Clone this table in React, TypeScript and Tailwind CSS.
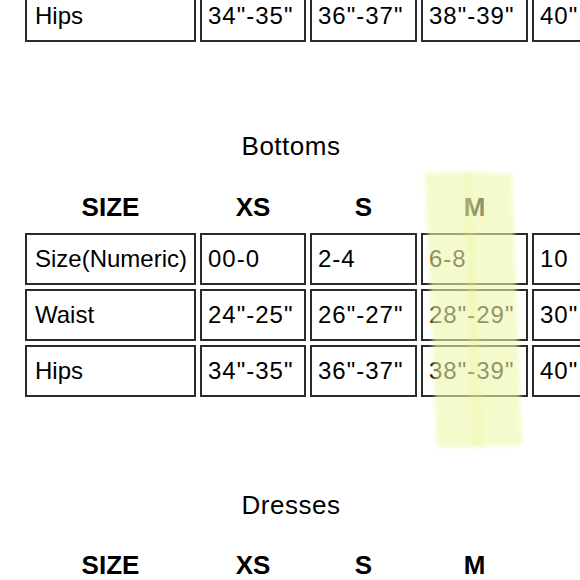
const grid = 'grid grid-cols-[171px_106px_107px_107px_106px] gap-x-[4px] pl-[25px]';

const bottoms = [
  ['Size(Numeric)', '00-0', '2-4', '6-8', '10'],
  ['Waist', '24"-25"', '26"-27"', '28"-29"', '30"'],
  ['Hips', '34"-35"', '36"-37"', '38"-39"', '40"'],
];

function Row({ cells }: { cells: string[] }) {
  return (
    <div className={grid}>
      {cells.map((c, i) => (
        <div
          key={i}
          className={
            'h-[52px] border-2 border-[#2b2b2b] flex items-center text-[24px] text-black whitespace-nowrap overflow-hidden ' +
            (i === 0 ? 'pl-2' : 'pl-[6px] tracking-[1px]')
          }
        >
          {c}
        </div>
      ))}
    </div>
  );
}

function HeaderRow() {
  return (
    <div className={grid}>
      {['SIZE', 'XS', 'S', 'M', ''].map((h, i) => (
        <div key={i} className="text-center text-[26px] leading-[30px] font-bold text-black">
          {h}
        </div>
      ))}
    </div>
  );
}

function Title({ children }: { children: string }) {
  return (
    <h2 className="text-center text-[26px] leading-[32px] tracking-[0.5px] text-black pl-[2px]">
      {children}
    </h2>
  );
}

export default function App() {
  return (
    <div className="relative w-[580px] h-[580px] overflow-hidden bg-white font-['Liberation_Sans',Arial,sans-serif]">
      <div className="-mt-[10px]">
        <Row cells={['Hips', '34"-35"', '36"-37"', '38"-39"', '40"']} />
      </div>

      <div className="mt-[88px]">
        <Title>Bottoms</Title>
      </div>
      <div className="mt-[30px]">
        <HeaderRow />
      </div>
      <div className="mt-[11px] flex flex-col gap-[4px]">
        {bottoms.map((r, i) => (
          <Row key={i} cells={r} />
        ))}
      </div>

      <div className="mt-[92px]">
        <Title>Dresses</Title>
      </div>
      <div className="mt-[29px]">
        <HeaderRow />
      </div>

      {/* highlighter marks over the M column */}
      <svg className="absolute inset-0 pointer-events-none" width="580" height="580">
        <defs>
          <filter id="soft" x="-10%" y="-10%" width="120%" height="120%">
            <feGaussianBlur stdDeviation="2" />
          </filter>
        </defs>
        <g filter="url(#soft)">
          <polygon
            points="425,173 471,172 512,174 522,445 482,447 437,447"
            fill="rgb(238,246,170)"
            fillOpacity={0.6}
          />
          <polygon
            points="463,172 471,172 483,447 473,447"
            fill="rgb(228,240,140)"
            fillOpacity={0.25}
          />
        </g>
      </svg>
    </div>
  );
}
